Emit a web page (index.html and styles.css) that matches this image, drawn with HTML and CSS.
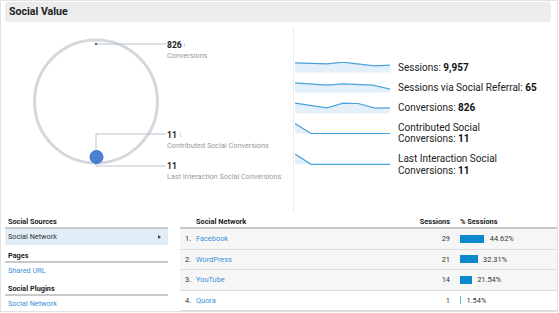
FILE: index.html
```html
<!DOCTYPE html>
<html lang="en">
<head>
    <meta charset="UTF-8">
    <title>Social Value</title>
    <link rel="stylesheet" href="styles.css">
</head>
<body>
<div class="frame">
    <div class="title-bar">Social Value</div>

    <div class="overview">
        <!-- bubble chart, drawn in page coordinates -->
        <svg class="bubble-chart" width="292" height="190" viewBox="1 22 292 190">
            <circle class="ring" cx="96" cy="101.5" r="61.5"/>
            <path class="leader" d="M96 44 H166"/>
            <path class="leader" d="M96 150 V134 H166"/>
            <path class="leader" d="M96 163 V166 H166"/>
            <circle class="dot-small" cx="96" cy="44" r="1.3"/>
            <circle class="dot-big" cx="96.5" cy="157" r="6.5"/>
            <text class="value" x="167" y="48">826</text>
            <path class="tick" d="M184.5 43 V47"/>
            <text class="caption" x="167" y="57.5">Conversions</text>
            <text class="value" x="167" y="137.5">11</text>
            <path class="tick" d="M180.5 133 V137"/>
            <text class="caption" x="167" y="147.5">Contributed Social Conversions</text>
            <text class="value" x="167" y="169">11</text>
            <text class="caption" x="167" y="179">Last Interaction Social Conversions</text>
        </svg>

        <div class="trends">
            <div class="trend">
                <svg class="spark" width="95" height="12" viewBox="0 0 95 12">
                    <path class="spark-fill" d="M0 0.8 L32 1.8 L48 0.2 L62 1.8 L80 3.8 L95 3.2 L95 10.5 L0 10.5 Z"/>
                    <path class="spark-line" d="M0 0.8 L32 1.8 L48 0.2 L62 1.8 L80 3.8 L95 3.2"/>
                </svg>
                <div class="trend-label">Sessions: <b>9,957</b></div>
            </div>
            <div class="trend">
                <svg class="spark" width="95" height="12" viewBox="0 0 95 12">
                    <path class="spark-fill" d="M0 0.8 L32 3.2 L48 1.8 L78 3.2 L95 7.2 L95 10.5 L0 10.5 Z"/>
                    <path class="spark-line" d="M0 0.8 L32 3.2 L48 1.8 L78 3.2 L95 7.2"/>
                </svg>
                <div class="trend-label">Sessions via Social Referral: <b>65</b></div>
            </div>
            <div class="trend">
                <svg class="spark" width="95" height="12" viewBox="0 0 95 12">
                    <path class="spark-fill" d="M0 1.2 L32 5.8 L48 1.2 L63 1.5 L80 6.2 L95 5.8 L95 11.2 L0 11.2 Z"/>
                    <path class="spark-line" d="M0 1.2 L32 5.8 L48 1.2 L63 1.5 L80 6.2 L95 5.8"/>
                </svg>
                <div class="trend-label">Conversions: <b>826</b></div>
            </div>
            <div class="trend">
                <svg class="spark" width="95" height="12" viewBox="0 0 95 12">
                    <path class="spark-fill" d="M0 1.5 L16 11.5 L0 11.5 Z"/>
                    <path class="spark-line" d="M0 1.5 L16 11.5 L95 11.5"/>
                </svg>
                <div class="trend-label">Contributed Social<br>Conversions: <b>11</b></div>
            </div>
            <div class="trend">
                <svg class="spark" width="95" height="12" viewBox="0 0 95 12">
                    <path class="spark-fill" d="M0 1 L16 11.3 L0 11.3 Z"/>
                    <path class="spark-line" d="M0 1 L16 11.3 L95 11.3"/>
                </svg>
                <div class="trend-label">Last Interaction Social<br>Conversions: <b>11</b></div>
            </div>
        </div>
    </div>

    <div class="sources">
        <div class="source-nav">
            <div class="nav-title">Social Sources</div>
            <div class="nav-item active">
                <span>Social Network</span>
                <svg class="nav-arrow" width="3" height="4" viewBox="0 0 3 4"><path d="M0 0 L3 2 L0 4 Z"/></svg>
            </div>
            <div class="nav-title">Pages</div>
            <a class="nav-item link">Shared URL</a>
            <div class="nav-title">Social Plugins</div>
            <a class="nav-item link">Social Network</a>
        </div>

        <div class="network-table">
            <div class="row head">
                <span></span>
                <span>Social Network</span>
                <span class="num">Sessions</span>
                <span class="pct">% Sessions</span>
            </div>
            <div class="row">
                <span class="idx">1.</span>
                <a class="link">Facebook</a>
                <span class="num">29</span>
                <span class="pct"><i class="bar" style="width:24.3px"></i>44.62%</span>
            </div>
            <div class="row">
                <span class="idx">2.</span>
                <a class="link">WordPress</a>
                <span class="num">21</span>
                <span class="pct"><i class="bar" style="width:17.6px"></i>32.31%</span>
            </div>
            <div class="row">
                <span class="idx">3.</span>
                <a class="link">YouTube</a>
                <span class="num">14</span>
                <span class="pct"><i class="bar" style="width:11.7px"></i>21.54%</span>
            </div>
            <div class="row last">
                <span class="idx">4.</span>
                <a class="link">Quora</a>
                <span class="num">1</span>
                <span class="pct"><i class="bar thin" style="width:1px"></i>1.54%</span>
            </div>
        </div>
    </div>
</div>
</body>
</html>
```

FILE: styles.css
```css
body {
    margin: 0;
    background-color: #fff;
    font-family: Roboto, 'Liberation Sans', sans-serif;
    color: #333;
}

.frame {
    width: 558px;
    height: 312px;
    box-sizing: border-box;
    border: 1px solid #e2e2e2;
    display: flex;
    flex-direction: column;
}

.title-bar {
    margin: 1px 6px 0 4px;
    height: 20px;
    line-height: 20px;
    padding-left: 4px;
    background-color: #ececec;
    border-radius: 3px;
    font-size: 10.6px;
    font-weight: bold;
    color: #222;
}

/* top half: bubble chart + sparklines */
.overview {
    display: flex;
    height: 190px;
}

.bubble-chart {
    display: block;
    flex: none;
    font-family: Roboto, 'Liberation Sans', sans-serif;
}

.ring {
    fill: none;
    stroke: #d4d8dd;
    stroke-width: 3;
}

.leader {
    fill: none;
    stroke: #b9c3ce;
    stroke-width: 1;
}

.tick {
    stroke: #d8d8d8;
    stroke-width: 1;
}

.dot-small {
    fill: #5f6f86;
}

.dot-big {
    fill: #4b7fd1;
    stroke: #3c6fc4;
    stroke-width: 1;
}

.value {
    font-size: 8.6px;
    font-weight: bold;
    fill: #1e1e1e;
}

.caption {
    font-size: 7.3px;
    fill: #9a9a9a;
}

.trends {
    margin-top: 5px;
    border-left: 1px solid #ececec;
    padding: 34.7px 0 0 1px;
    display: flex;
    flex-direction: column;
    gap: 8px;
}

.trend {
    display: flex;
    align-items: flex-start;
    gap: 8px;
}

.spark {
    display: block;
    flex: none;
}

.spark-fill {
    fill: #e3f0fa;
}

.spark-line {
    fill: none;
    stroke: #4aa2de;
    stroke-width: 1.2;
}

.trend-label {
    font-size: 10px;
    line-height: 11.7px;
    color: #222;
}

.trend-label b {
    font-weight: bold;
    color: #111;
}

/* bottom half: source list + table */
.sources {
    display: flex;
    flex: 1;
}

.source-nav {
    width: 163px;
    margin-left: 4px;
    font-size: 7.3px;
}

.nav-title {
    margin-top: 5px;
    height: 10px;
    line-height: 10px;
    padding-left: 3px;
    font-weight: bold;
    color: #222;
    border-bottom: 2px solid #c9c9c9;
}

.nav-title + .nav-item + .nav-title {
    margin-top: 6px;
}

.nav-item {
    display: flex;
    align-items: center;
    justify-content: space-between;
    height: 15.5px;
    line-height: 15.5px;
    padding: 0 7px 0 3px;
}

.nav-item.active {
    background-color: #e1eef8;
    color: #333;
}

.nav-arrow {
    fill: #444;
}

.link {
    color: #3a91d8;
    text-decoration: none;
}

.network-table {
    flex: 1;
    margin-left: 12px;
    font-size: 7.4px;
}

.row {
    display: grid;
    grid-template-columns: 16px 1fr 40px 107px;
    align-items: center;
    height: 20.5px;
    box-sizing: border-box;
    background-color: #f6f6f6;
    border-bottom: 1px solid #dcdcdc;
}

.row.last {
    background-color: #fff;
}

.row.head {
    margin-top: 5px;
    height: 12px;
    line-height: 10px;
    align-items: start;
    background-color: #fff;
    border-bottom: 2px solid #c9c9c9;
    font-weight: bold;
    color: #222;
}

.idx {
    padding-left: 5px;
    color: #333;
}

.num {
    text-align: right;
}

.pct {
    display: flex;
    align-items: center;
    padding-left: 10px;
}

.row.head .pct {
    display: block;
}

.bar {
    display: block;
    height: 8px;
    margin-right: 5.5px;
    background-color: #0b89cf;
}

.bar.thin {
    background-color: #6bb8e6;
}
```
